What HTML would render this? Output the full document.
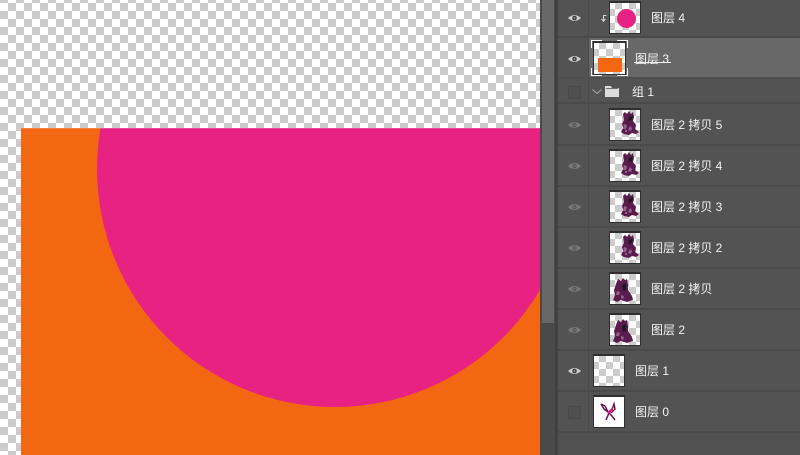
<!DOCTYPE html>
<html><head><meta charset="utf-8">
<style>
html,body{margin:0;padding:0;width:800px;height:455px;overflow:hidden;background:#535353}
div,svg,span{position:absolute;box-sizing:border-box}
.chk{background-color:#fff;background-image:conic-gradient(#ccc 25%,#fff 0 50%,#ccc 0 75%,#fff 0)}
.t{font:12px/14px "Liberation Sans","WenQuanYi Zen Hei","Noto Sans CJK SC",sans-serif;color:#f4f4f4;white-space:pre}
.sep{left:558px;width:242px;height:2px;background:#4a4a4a}
.th{width:32px;height:33px;border:1px solid #2f2f2f;border-top-width:2px;background-size:14px 14px;background-position:-2px -1px}
.eye{left:568px;width:13px;height:10px}
.box{left:568px;width:13px;height:13px;border:1px solid #484848;background:#4f4f4f}
</style></head>
<body>
<svg width="0" height="0" style="left:0;top:0">
<defs>
<g id="eyep"><path d="M0 5Q6.500-.8 13 5Q6.500 10.800 0 5Z"/><circle cx="6.500" cy="5" r="2.300" fill="#3e3e3e"/><circle cx="6.500" cy="5" r="1" fill="#8a8a8a"/></g>
<g id="eyed"><path d="M0 5Q6.500-.8 13 5Q6.500 10.800 0 5Z"/><circle cx="6.500" cy="5" r="2.300" fill="#5a5a5a"/><circle cx="6.500" cy="5" r="1" fill="#6c6c6c"/></g>
<g id="blobA"><path d="M14 6L16 4 18 6 20 3 22 6 24 4 25 9 24 13 27 17 26 21 30 24 27 26 23 25 20 27 15 26 12 24 14 20 13 16 15 12Z" fill="#5a1c4c"/><path d="M20 9L24 7 23 12 19 13Z" fill="#1d1a1f"/><path d="M15 16l3 1-1 4-3 0ZM21 18l2 2-1 3-3-1ZM16 22l2 0 0 2-2 0Z" fill="#94628a"/></g>
<g id="blobB"><path d="M7 12L9 7 12 9 14 6 16 8 18 7 19 13 19 18 23 24 24 28 18 30 12 28 8 30 4 28 6 23 5 18Z" fill="#5a1c4c"/><path d="M13 13L17 11 17 18 14 19Z" fill="#1a1a22"/><path d="M8 19l3 1-1 3-3 0ZM12 23l3 1-1 3-2-1Z" fill="#94628a"/></g>
</defs>
</svg>

<!-- canvas -->
<div class="chk" style="left:0;top:0;width:540px;height:455px;background-size:16px 16px;background-position:0 3px"></div>
<div style="left:21px;top:128px;width:519px;height:327px;background:#f36713;overflow:hidden">
  <div style="left:76px;top:-197px;width:476px;height:476px;border-radius:50%;background:#e82282"></div>
  <div style="left:0;top:0;width:519px;height:1px;background:rgba(255,255,255,.18)"></div>
</div>

<!-- scrollbar -->
<div style="left:540px;top:0;width:15px;height:455px;background:#4a4a4a"></div>
<div style="left:542px;top:0;width:12px;height:323px;background:#686868"></div>
<div style="left:555px;top:0;width:3px;height:455px;background:#414141"></div>
<div style="left:558px;top:0;width:242px;height:432px;background:#535353"></div>
<div style="left:558px;top:432px;width:242px;height:23px;background:#515151"></div>

<!-- eye column divider -->
<div style="left:588px;top:0;width:1px;height:432px;background:#4a4a4a"></div>

<!-- selected -->
<div style="left:589px;top:38px;width:211px;height:40px;background:#686868"></div>

<!-- separators -->
<div class="sep" style="top:36px"></div>
<div class="sep" style="top:77px;background:#4e4e4e"></div>
<div class="sep" style="top:102px"></div>
<div class="sep" style="top:144px"></div>
<div class="sep" style="top:185px"></div>
<div class="sep" style="top:226px"></div>
<div class="sep" style="top:267px"></div>
<div class="sep" style="top:308px"></div>
<div class="sep" style="top:349px"></div>
<div class="sep" style="top:390px"></div>
<div class="sep" style="top:431px"></div>

<!-- eyes -->
<svg class="eye" style="top:13px" viewBox="0 0 13 10" fill="#d2d2d2"><use href="#eyep"/></svg>
<svg class="eye" style="top:54px" viewBox="0 0 13 10" fill="#d2d2d2"><use href="#eyep"/></svg>
<div class="box" style="top:86px"></div>
<svg class="eye" style="top:120px" viewBox="0 0 13 10" fill="#7d7d7d"><use href="#eyed"/></svg>
<svg class="eye" style="top:161px" viewBox="0 0 13 10" fill="#7d7d7d"><use href="#eyed"/></svg>
<svg class="eye" style="top:202px" viewBox="0 0 13 10" fill="#7d7d7d"><use href="#eyed"/></svg>
<svg class="eye" style="top:243px" viewBox="0 0 13 10" fill="#7d7d7d"><use href="#eyed"/></svg>
<svg class="eye" style="top:284px" viewBox="0 0 13 10" fill="#7d7d7d"><use href="#eyed"/></svg>
<svg class="eye" style="top:325px" viewBox="0 0 13 10" fill="#7d7d7d"><use href="#eyed"/></svg>
<svg class="eye" style="top:366px" viewBox="0 0 13 10" fill="#d2d2d2"><use href="#eyep"/></svg>
<div class="box" style="top:406px"></div>

<!-- clip arrow row 4 -->
<svg style="left:600px;top:15px;width:7px;height:7px" viewBox="0 0 7 7"><path d="M6.500 .5H3.500V5.500M1.500 3.800L3.500 6.300 5.500 3.800" fill="none" stroke="#d8d8d8" stroke-width="1"/></svg>

<!-- row 4 thumb -->
<div class="th chk" style="left:609px;top:1px"></div>
<div style="left:617px;top:9px;width:19px;height:19px;border-radius:50%;background:#e82282"></div>
<div class="t" style="left:651px;top:11px">图层 4</div>

<!-- row 3 thumb -->
<div class="th chk" style="left:593px;top:41px;width:33px;height:34px"></div>
<div style="left:598px;top:58px;width:24px;height:14px;background:#f36713"></div>
<svg style="left:591px;top:40px;width:37px;height:36px" viewBox="0 0 37 36" fill="none" stroke="#fff" stroke-width="1"><path d="M.5 8V.5H11M26 .5H36.500V8M.5 28V35.500H11M26 35.500H36.500V28"/></svg>
<div class="t" style="left:635px;top:52px">图层 3</div>
<div style="left:634px;top:62px;width:37px;height:1px;background:#f0f0f0"></div>

<!-- group -->
<svg style="left:592px;top:89px;width:10px;height:5px" viewBox="0 0 10 5"><path d="M.5 .5L5 4.500 9.500 .5" fill="none" stroke="#a8a8a8" stroke-width="1"/></svg>
<svg style="left:605px;top:86px;width:14px;height:11px" viewBox="0 0 14 11"><path d="M0 0H6L7 2H14V11H0Z" fill="#dcdcdc"/><path d="M1 2.500H13" stroke="#535353" stroke-width=".8"/></svg>
<div class="t" style="left:632px;top:85px">组 1</div>

<!-- layer 2 copies -->
<div class="th chk" style="left:609px;top:108px"></div>
<svg style="left:609px;top:108px;width:32px;height:33px" viewBox="0 0 32 33"><use href="#blobA"/></svg>
<div class="t" style="left:651px;top:118px">图层 2 拷贝 5</div>

<div class="th chk" style="left:609px;top:149px"></div>
<svg style="left:609px;top:149px;width:32px;height:33px" viewBox="0 0 32 33"><use href="#blobA"/></svg>
<div class="t" style="left:651px;top:159px">图层 2 拷贝 4</div>

<div class="th chk" style="left:609px;top:190px"></div>
<svg style="left:609px;top:190px;width:32px;height:33px" viewBox="0 0 32 33"><use href="#blobA"/></svg>
<div class="t" style="left:651px;top:200px">图层 2 拷贝 3</div>

<div class="th chk" style="left:609px;top:231px"></div>
<svg style="left:609px;top:231px;width:32px;height:33px" viewBox="0 0 32 33"><use href="#blobA"/></svg>
<div class="t" style="left:651px;top:241px">图层 2 拷贝 2</div>

<div class="th chk" style="left:609px;top:272px"></div>
<svg style="left:609px;top:272px;width:32px;height:33px" viewBox="0 0 32 33"><use href="#blobB"/></svg>
<div class="t" style="left:651px;top:282px">图层 2 拷贝</div>

<div class="th chk" style="left:609px;top:313px"></div>
<svg style="left:609px;top:313px;width:32px;height:33px" viewBox="0 0 32 33"><use href="#blobB"/></svg>
<div class="t" style="left:651px;top:323px">图层 2</div>

<!-- layer 1 -->
<div class="th chk" style="left:593px;top:354px"></div>
<div class="t" style="left:635px;top:364px">图层 1</div>

<!-- layer 0 -->
<div class="th" style="left:593px;top:395px;background:#fff"></div>
<svg style="left:593px;top:395px;width:32px;height:33px" viewBox="0 0 32 33" fill="none"><path d="M8 9L11 14 15 17 19 21 22 25M8 9L12 11 15 17M13 25L16 18 20 12 21 9 22 14 18 18" stroke="#5f1a4f" stroke-width="1.500"/><path d="M14 17L18 14 20 12 20 15 17 18 15 19Z" fill="#f0148c"/></svg>
<div class="t" style="left:635px;top:405px">图层 0</div>
</body></html>
